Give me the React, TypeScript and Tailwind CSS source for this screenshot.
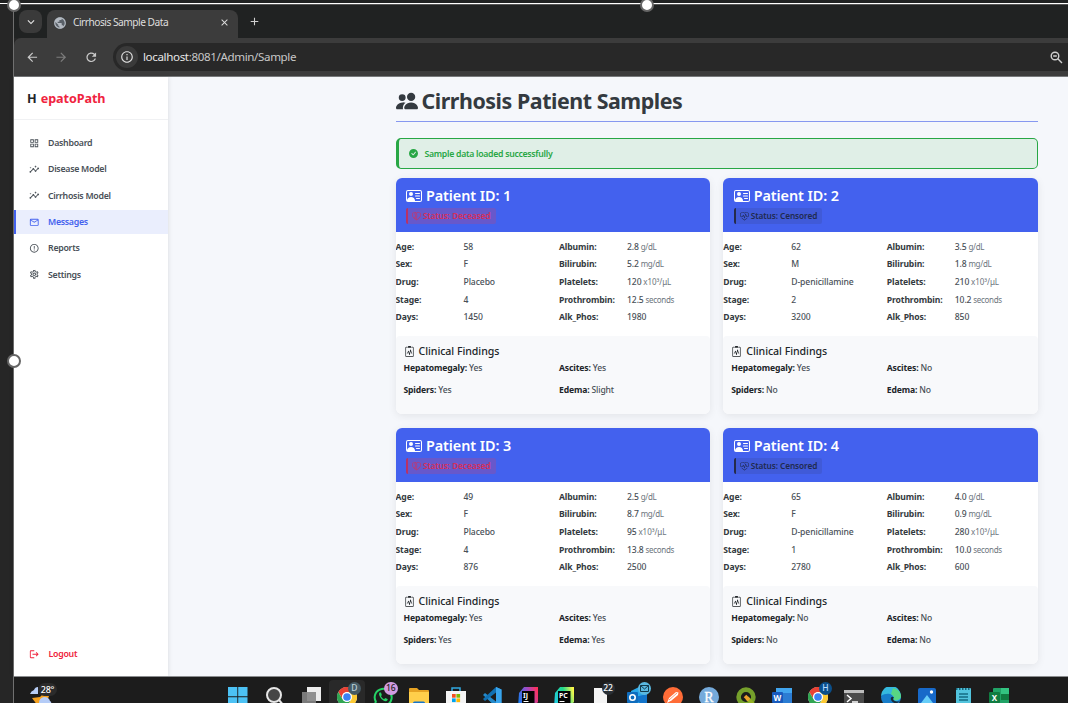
import React from "react";
import type { ReactNode } from "react";
import {
  BsCheckCircleFill,
  BsClipboard2Pulse,
  BsHeartPulse,
  BsPeopleFill,
  BsPersonVcard,
  BsHeartbreak,
} from "react-icons/bs";
import {
  MdAdd,
  MdArrowBack,
  MdArrowForward,
  MdClose,
  MdErrorOutline,
  MdInfoOutline,
  MdInsights,
  MdKeyboardArrowDown,
  MdLogout,
  MdOutlineGridView,
  MdOutlineMail,
  MdOutlineSettings,
  MdPublic,
  MdRefresh,
} from "react-icons/md";

type Patient = {
  id: number;
  deceased: boolean;
  age: string;
  sex: string;
  drug: string;
  stage: string;
  days: string;
  albumin: string;
  bilirubin: string;
  platelets: string;
  prothrombin: string;
  alkPhos: string;
  hepatomegaly: string;
  ascites: string;
  spiders: string;
  edema: string;
};

const patients: Patient[] = [
  { id: 1, deceased: true, age: "58", sex: "F", drug: "Placebo", stage: "4", days: "1450", albumin: "2.8", bilirubin: "5.2", platelets: "120", prothrombin: "12.5", alkPhos: "1980", hepatomegaly: "Yes", ascites: "Yes", spiders: "Yes", edema: "Slight" },
  { id: 2, deceased: false, age: "62", sex: "M", drug: "D-penicillamine", stage: "2", days: "3200", albumin: "3.5", bilirubin: "1.8", platelets: "210", prothrombin: "10.2", alkPhos: "850", hepatomegaly: "Yes", ascites: "No", spiders: "No", edema: "No" },
  { id: 3, deceased: true, age: "49", sex: "F", drug: "Placebo", stage: "4", days: "876", albumin: "2.5", bilirubin: "8.7", platelets: "95", prothrombin: "13.8", alkPhos: "2500", hepatomegaly: "Yes", ascites: "Yes", spiders: "Yes", edema: "Yes" },
  { id: 4, deceased: false, age: "65", sex: "F", drug: "D-penicillamine", stage: "1", days: "2780", albumin: "4.0", bilirubin: "0.9", platelets: "280", prothrombin: "10.0", alkPhos: "600", hepatomegaly: "No", ascites: "No", spiders: "No", edema: "No" },
];

function BrowserChrome() {
  return (
    <header className="shrink-0">
      <div className="flex h-[33px] items-end bg-[#202222] pl-[5px]">
        <div className="mb-[5px] flex h-[23px] w-[23px] items-center justify-center rounded-[8px] bg-[#3a3a3a] text-[#e3e3e3]">
          <MdKeyboardArrowDown size={14} />
        </div>
        <div className="ml-[5px] flex h-[28px] w-[191px] items-center rounded-t-[8px] bg-[#3c3c3c] pb-[3px] pl-[7px] pr-[8px] text-[#dedede]">
          <span className="flex h-[12px] w-[12px] items-center justify-center rounded-full bg-[#596068]">
            <MdPublic size={14} className="shrink-0 text-[#b4bac2]" />
          </span>
          <span className="ml-[7px] flex-1 whitespace-nowrap text-[10.2px] tracking-[-0.5px]">Cirrhosis Sample Data</span>
          <MdClose size={11} />
        </div>
        <MdAdd size={13} className="mb-[10px] ml-[10px] text-[#d0d0d0]" />
      </div>
      <div className="flex h-[38px] items-center rounded-tl-[7px] bg-[#3c3c3c] pl-[11px] text-[#c9c9c9]">
        <MdArrowBack size={14.5} />
        <MdArrowForward size={14.5} className="ml-[14.5px] text-[#7c7c7c]" />
        <MdRefresh size={14.5} className="ml-[15.5px]" />
        <div className="ml-[14px] flex h-[28px] flex-1 items-center rounded-l-full bg-[#282828] pl-[3px] pr-[5px]">
          <div className="flex h-[22px] w-[22px] items-center justify-center rounded-full bg-[#3a3a3a]">
            <MdInfoOutline size={14} className="text-[#e0e0e0]" />
          </div>
          <span className="ml-[5.5px] flex-1 text-[11.6px] tracking-[-0.37px] text-[#c7c7c7]">
            <span className="text-[#e6e6e6]">localhost</span>:8081/Admin/Sample
          </span>
          <svg width="13" height="13" viewBox="0 0 13 13" fill="none" stroke="#d0d0d0" strokeWidth="1.4">
            <circle cx="5" cy="5" r="3.8" />
            <path d="M3.2 5h3.6M7.800 7.800l4.200 4.200" />
          </svg>
        </div>
      </div>
      <div className="h-px bg-[#77797b]" />
    </header>
  );
}

function NavItem({ icon, label, active }: { icon: ReactNode; label: string; active?: boolean }) {
  return (
    <li
      className={
        active
          ? "flex h-6 items-center border-l-2 border-[#4361ee] bg-[#eaeefd] pl-[13px] text-[#4361ee]"
          : "flex h-6 items-center border-l-2 border-transparent pl-[13px] text-[#495057]"
      }
    >
      <span className="w-[19px] text-[10.5px]">{icon}</span>
      <span className="pt-[1.5px] text-[8.8px] font-semibold tracking-[-0.28px]">{label}</span>
    </li>
  );
}

function Sidebar() {
  return (
    <aside className="flex w-[153.5px] shrink-0 flex-col bg-white shadow-[0_0_5px_rgba(0,0,0,0.12)]">
      <div className="h-[43px] border-b border-[#f0f1f3] pl-[13px] pt-[12px] text-[12.6px] font-bold leading-[20px] tracking-[-0.08px] text-[#212529]">
        H <span className="ml-px text-[#f0243f]">epatoPath</span>
      </div>
      <ul className="flex flex-1 flex-col gap-[2.3px] pt-[11px]">
        <NavItem icon={<MdOutlineGridView />} label="Dashboard" />
        <NavItem icon={<MdInsights />} label="Disease Model" />
        <NavItem icon={<MdInsights />} label="Cirrhosis Model" />
        <NavItem icon={<MdOutlineMail />} label="Messages" active />
        <NavItem icon={<MdErrorOutline />} label="Reports" />
        <NavItem icon={<MdOutlineSettings stroke="currentColor" strokeWidth={0} />} label="Settings" />
      </ul>
      <div className="flex h-[44px] items-center pl-[15px] text-[#ef233c]">
        <MdLogout size={10.5} />
        <span className="ml-[9px] pt-[2px] text-[8.8px] font-semibold tracking-[-0.28px]">Logout</span>
      </div>
    </aside>
  );
}

function Field({ label, value, unit }: { label: string; value: string; unit?: ReactNode }) {
  return (
    <div className="flex h-[17.6px] items-center whitespace-nowrap text-[8.6px]">
      <span className="w-[68px] font-bold tracking-[-0.12px] text-[#343a40]">{label}:</span>
      <span className="font-medium tracking-[-0.1px] text-[#495057]">
        {value}
        {unit && <span className="text-[8px] font-normal tracking-[-0.3px] text-[#6c757d]"> {unit}</span>}
      </span>
    </div>
  );
}

function Finding({ label, value }: { label: string; value: string }) {
  return (
    <div className="h-[22px] whitespace-nowrap text-[8.6px] font-medium leading-[12px] tracking-[-0.15px] text-[#495057]">
      <span className="font-bold text-[#212529]">{label}:</span> {value}
    </div>
  );
}

function PatientCard({ p }: { p: Patient }) {
  return (
    <article className="h-[236px] overflow-hidden rounded-[6px] bg-white shadow-[0_2px_8px_rgba(0,0,0,0.08)]">
      <div className="h-[54px] bg-[#4361ee] pl-[10.5px] pt-[8px]">
        <h2 className="flex h-[19px] items-center gap-[4px] whitespace-nowrap text-[14.4px] font-semibold tracking-[-0.08px] text-white">
          <BsPersonVcard size={16} />
          Patient ID: {p.id}
        </h2>
        {p.deceased ? (
          <div className="mt-[2.5px] flex h-[16px] w-[90px] items-center gap-[2px] whitespace-nowrap rounded-[2px] border-l-2 border-[#b83267] bg-[#6758cb] pl-[4px] pt-px text-[8.3px] font-semibold tracking-[-0.08px] text-[#d72f59]">
            <BsHeartbreak size={9} />
            Status: Deceased
          </div>
        ) : (
          <div className="mt-[2.5px] flex h-[16px] w-[88px] items-center gap-[2px] whitespace-nowrap rounded-[2px] border-l-2 border-[#252b4c] bg-[#405ad8] pl-[4px] pt-px text-[8.3px] font-semibold tracking-[-0.1px] text-[#202a50]">
            <BsHeartPulse size={9} />
            Status: Censored
          </div>
        )}
      </div>
      <div className="grid h-[104px] grid-cols-[163.5px_1fr] pt-[6.5px]">
        <div>
          <Field label="Age" value={p.age} />
          <Field label="Sex" value={p.sex} />
          <Field label="Drug" value={p.drug} />
          <Field label="Stage" value={p.stage} />
          <Field label="Days" value={p.days} />
        </div>
        <div>
          <Field label="Albumin" value={p.albumin} unit="g/dL" />
          <Field label="Bilirubin" value={p.bilirubin} unit="mg/dL" />
          <Field label="Platelets" value={p.platelets} unit={<span className="tracking-[-0.05px]">x10³/μL</span>} />
          <Field label="Prothrombin" value={p.prothrombin} unit="seconds" />
          <Field label="Alk_Phos" value={p.alkPhos} />
        </div>
      </div>
      <section className="h-[78px] rounded-t-[4px] bg-[#f8f9fb] pl-[8px] pt-[8px]">
        <h3 className="flex h-[15px] items-center gap-[4px] text-[10.6px] font-medium tracking-[-0.05px] text-[#212529]">
          <BsClipboard2Pulse size={11} />
          Clinical Findings
        </h3>
        <div className="mt-[3px] grid grid-cols-[155.5px_1fr]">
          <Finding label="Hepatomegaly" value={p.hepatomegaly} />
          <Finding label="Ascites" value={p.ascites} />
          <Finding label="Spiders" value={p.spiders} />
          <Finding label="Edema" value={p.edema} />
        </div>
      </section>
    </article>
  );
}

function Slot({ children, badge, badgeClass, open }: { children: ReactNode; badge?: ReactNode; badgeClass?: string; open?: boolean }) {
  return (
    <div className={open ? "relative flex h-[34px] w-[36.25px] shrink-0 justify-center rounded-[4px] bg-[#292929] pt-[7px]" : "relative flex h-[34px] w-[36.25px] shrink-0 justify-center pt-[7px]"}>
      <svg width="20" height="20" viewBox="0 0 20 20">
        {children}
      </svg>
      {badge && (
        <span className={`absolute left-[19px] top-[2px] flex h-[13px] min-w-[13px] items-center justify-center rounded-full text-[8.5px] font-medium leading-none ${badgeClass}`}>
          {badge}
        </span>
      )}
    </div>
  );
}

function ChromeLogo() {
  return (
    <>
      <circle cx="10" cy="10" r="10" fill="#fff" />
      <path d="M1.3 5A10 10 0 0 1 18.7 5H10a5 5 0 0 0-4.3 7.5Z" fill="#e94235" />
      <path d="M1.3 5A10 10 0 0 0 10 20l4.3-7.5A5 5 0 0 1 5.7 12.5Z" fill="#31a552" />
      <path d="M18.7 5A10 10 0 0 1 10 20l4.3-7.5A5 5 0 0 0 10 5Z" fill="#fcc934" />
      <circle cx="10" cy="10" r="4.8" fill="#fff" />
      <circle cx="10" cy="10" r="3.8" fill="#3b82f6" />
    </>
  );
}

function JetBrains({ name, a, b, c }: { name: string; a: string; b: string; c: string }) {
  return (
    <>
      <defs>
        <linearGradient id={`jb-${name}`} x1="0" y1="0.6" x2="1" y2="0.3">
          <stop offset="0" stopColor={a} />
          <stop offset="0.55" stopColor={b} />
          <stop offset="1" stopColor={c} />
        </linearGradient>
      </defs>
      <path d="M1 6 6 0H20V15l-5 5H0Z" fill={`url(#jb-${name})`} />
      <rect x="4" y="4" width="12.5" height="13" fill="#050505" />
      <text x="5" y="10.5" fontSize="7" fontWeight="700" fill="#fff">{name}</text>
      <path d="M5.5 14.5h5" stroke="#fff" />
    </>
  );
}

function Taskbar() {
  return (
    <footer className="flex h-[26px] shrink-0 overflow-hidden bg-[#1c1c1c] pt-[3px]">
      <div className="relative ml-[15px] mr-[155px] mt-[5px] h-[30px] w-[36px] shrink-0">
        <svg width="36" height="30" viewBox="0 0 36 30">
          <path d="M1 9q1-3 4-4 1-3 4-3v7Z" fill="#b7cdf5" />
          <path d="m3 13 8-1 2-2 7 1-3 8-8 2Z" fill="#f5a11f" />
          <path d="M10 18q0-5 5-6 5 0 6 4 2 1 1 4H12Z" fill="#b5ccf7" />
        </svg>
        <span className="absolute left-[9px] top-[-2px] flex h-[13px] w-[19px] items-center justify-center rounded-full bg-[#2b2b2b] text-[9px] font-medium tracking-[-0.2px] text-white">28°</span>
      </div>
      <Slot>
        <path d="M0 0h9.300v9.300H0Zm10.200 0h9.300v9.300h-9.300ZM0 10.200h9.300v9.300H0Zm10.200 0h9.300v9.300h-9.300Z" fill="#4cc2f5" />
      </Slot>
      <Slot>
        <circle cx="10" cy="8" r="7" fill="#454545" stroke="#e6e6e6" strokeWidth="2" />
        <path d="m15 13 5 6" stroke="#e6e6e6" strokeWidth="2" />
      </Slot>
      <Slot>
        <path d="M6 0h14v14H6Z" fill="#ececec" />
        <path d="M1 5h14v14H1Z" fill="#858585" fillOpacity=".9" />
      </Slot>
      <Slot open badge="D" badgeClass="bg-[#455a64] text-[#bfd0d8]">
        <ChromeLogo />
      </Slot>
      <Slot badge="16" badgeClass="bg-[#d29be0] text-[#222] px-[2px]">
        <path d="m1.500 19 1.300-4.500A8.500 8.500 0 1 1 6 17.700Z" fill="none" stroke="#25d366" strokeWidth="2" />
        <path d="M6.500 5.500c-2 2 2.500 9 6.500 8.700 1.700-.3 2-2 1.500-2.200L12.300 11l-1.300 1.200Q9 11.500 8 9.300L8.800 8 8 5.600Z" fill="#25d366" />
      </Slot>
      <Slot>
        <path d="M0 2q0-1 1-1h7l2 2h9q1 0 1 1v15H0Z" fill="#e6a323" />
        <path d="M0 5h20v14H0Z" fill="#ffcf4b" />
        <path d="M4 16q0-1.500 1.500-1.500h9Q16 14.500 16 16v4H4Z" fill="#1674c8" />
      </Slot>
      <Slot>
        <path d="M6 4V1h8v3" fill="none" stroke="#31a8df" strokeWidth="1.500" />
        <path d="M0 4h20v13q0 3-3 3H3q-3 0-3-3Z" fill="#f4f4f4" />
        <path d="M6 7h3.700v3.700H6Z" fill="#f25022" />
        <path d="M10.400 7h3.700v3.700h-3.700Z" fill="#7fba00" />
        <path d="M6 11.400h3.700v3.700H6Z" fill="#00a4ef" />
        <path d="M10.400 11.400h3.700v3.700h-3.700Z" fill="#ffb900" />
      </Slot>
      <Slot>
        <path d="m14 0 5.500 2.500v15L14 20 1 8l2-2 11 8.500Z" fill="#2489ca" />
        <path d="M14 0v5.500L3 14l-2-2Z" fill="#1070b3" />
        <path d="m14 0 5.500 2.500v15L14 20Z" fill="#39a5ed" />
      </Slot>
      <Slot><JetBrains name="IJ" a="#167df0" b="#a04bc5" c="#fe315d" /></Slot>
      <Slot><JetBrains name="PC" a="#20cbe2" b="#21d789" c="#fcf84a" /></Slot>
      <Slot badge="22" badgeClass="bg-[#2a2f35] text-white px-[1px]">
        <path d="M3 1h13v19H3Z" fill="#f4f4f4" />
      </Slot>
      <Slot
        badge={<svg width="9" height="7" viewBox="0 0 9 7" fill="none" stroke="#123a4d"><path d="M.5.5h8v6h-8Zm0 0 4 3.500 4-3.500" /></svg>}
        badgeClass="bg-[#5ab8e0]"
      >
        <path d="m4 4 8-4 8 4v16H4Z" fill="#28a8ea" />
        <path d="M4 11 20 20V7Z" fill="#1374ca" />
        <rect x="0" y="5" width="11" height="11" rx="1" fill="#0f6cbd" />
        <circle cx="5.500" cy="10.500" r="2.700" fill="none" stroke="#fff" strokeWidth="1.600" />
      </Slot>
      <Slot>
        <circle cx="10" cy="10" r="10" fill="#ff6c37" />
        <path d="m4 16 2-5 7-6 2.500.5L15 8l-6.500 5.500Z" fill="#fff" />
        <path d="m6 13 8-7" stroke="#ff6c37" strokeWidth=".7" />
      </Slot>
      <Slot>
        <circle cx="10" cy="10" r="10" fill="#75aadb" />
        <text x="5.300" y="14.500" fontSize="14" fontFamily="Liberation Serif" fill="#fff" stroke="#fff" strokeWidth=".3">R</text>
      </Slot>
      <Slot>
        <circle cx="10" cy="10" r="7.400" fill="none" stroke="#75a02b" strokeWidth="4.600" />
        <path d="m11 11 8 8" stroke="#93b023" strokeWidth="4" />
        <path d="m9 9 4 4" stroke="#f0a02c" strokeWidth="3.500" />
      </Slot>
      <Slot>
        <rect x="4" y="1" width="16" height="18" rx="1" fill="#2b7cd3" />
        <path d="M4 1h16v5H4Z" fill="#41a5ee" />
        <rect y="5" width="11" height="11" rx="1" fill="#185abd" />
        <text x="1.500" y="13.500" fontSize="8" fontWeight="700" fill="#fff">W</text>
      </Slot>
      <Slot badge="H" badgeClass="bg-[#0b4f8a] text-[#b6dcff]"><ChromeLogo /></Slot>
      <Slot>
        <path d="M0 3h20v17H0Z" fill="#4b4b4b" />
        <path d="M0 3h20v3H0Z" fill="#bebebe" />
        <path d="m3 8 4 3.500L3 15m5 0h6" fill="none" stroke="#fff" strokeWidth="1.500" />
      </Slot>
      <Slot>
        <circle cx="10" cy="10" r="10" fill="#177dc9" />
        <path d="M0 9A10 10 0 0 1 20 9c0 5-5 6-8 4 2-7-7-8-12-4Z" fill="#35b9de" />
        <path d="M12 1q8 2 8 9-2 4-8 3 3-3-2-6Z" fill="#58d783" />
        <path d="M10 13q-1-4 3-3-2 3 1 4 3 1 5 0-5 5-9-1Z" fill="#192b39" />
      </Slot>
      <Slot>
        <rect x="1" y="1" width="18" height="19" rx="2" fill="#1769c9" />
        <path d="m1 20 9-12 9 12Z" fill="#66cdf8" />
        <circle cx="14.500" cy="5" r="1.700" fill="#fff" />
      </Slot>
      <Slot>
        <rect x="3" y="1" width="15" height="19" rx="1" fill="#52c4dd" />
        <path d="M3 2h15" stroke="#16677c" strokeWidth="2" strokeDasharray="1.500 1.500" />
        <path d="M6 7h9M6 10h9M6 13h9" stroke="#146c84" strokeWidth="1.300" />
      </Slot>
      <Slot>
        <rect x="4" y="1" width="16" height="19" rx="1" fill="#21a366" />
        <path d="M12 1h8v6h-8Z" fill="#33c481" />
        <path d="M12 7h8v6h-8Z" fill="#107c41" />
        <rect y="5" width="11" height="11" rx="1" fill="#107c41" />
        <text x="2.800" y="13.500" fontSize="8" fontWeight="700" fill="#fff">X</text>
      </Slot>
    </footer>
  );
}

function Handle({ className }: { className: string }) {
  return <span className={`absolute h-[14px] w-[14px] rounded-full border-2 border-[#666] bg-white ${className}`} />;
}

export default function App() {
  return (
    <div className="relative flex h-[703px] w-[1068px] overflow-hidden bg-[#262626] font-['Noto_Sans','Open_Sans',sans-serif]">
      <div className="w-[13px] shrink-0 border-t-[3px] border-[#1f2020]">
        <div className="h-px bg-white" />
      </div>
      <div className="flex min-w-0 flex-1 flex-col border-l border-[#707070]">
        <div className="h-[5px] shrink-0 border-b border-[#555] bg-[#202222] pt-[3px]">
          <div className="h-px bg-white" />
        </div>
        <BrowserChrome />
        <div className="flex h-[599px] shrink-0 bg-[#f5f7fb]">
          <Sidebar />
          <main className="ml-[228px] w-[642px] pt-[10px]">
            <h1 className="flex h-[35px] items-center gap-[4px] whitespace-nowrap border-b border-[#8798f0] pb-[6px] text-[21.4px] font-bold tracking-[-0.45px] text-[#343a40]">
              <BsPeopleFill size={22} />
              Cirrhosis Patient Samples
            </h1>
            <div className="mt-[16px] flex h-[31px] items-center rounded-[5px] border border-l-[3px] border-[#28a745] bg-[#e0efe7] pl-[10px] text-[8.7px] font-semibold tracking-[-0.28px] text-[#28a745]">
              <BsCheckCircleFill size={9} />
              <span className="ml-[7px] pt-[2px]">Sample data loaded successfully</span>
            </div>
            <div className="mt-[9px] grid grid-cols-2 gap-x-[13.5px] gap-y-[14px]">
              {patients.map((p) => (
                <PatientCard key={p.id} p={p} />
              ))}
            </div>
          </main>
        </div>
        <div className="h-px shrink-0 bg-[#8b8d8f]" />
        <Taskbar />
      </div>
      <Handle className="left-[7px] top-[-2px]" />
      <Handle className="left-[640px] top-[-2px]" />
      <Handle className="left-[7px] top-[354px]" />
    </div>
  );
}
